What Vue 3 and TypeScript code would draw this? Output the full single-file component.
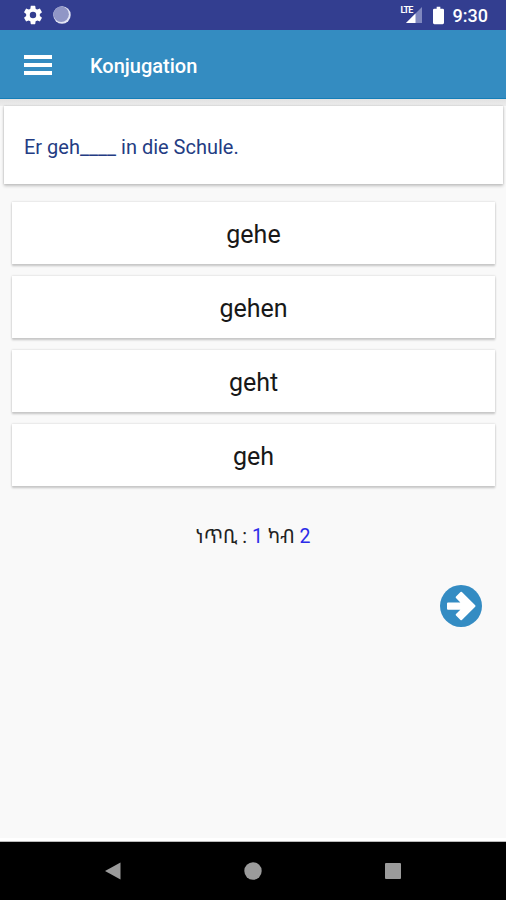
<script setup lang="ts">
import { ref } from 'vue'

const title = 'Konjugation'
const answers: string[] = ['gehe', 'gehen', 'geht', 'geh']
const current = ref(1)
const total = 2
</script>

<template>
  <div class="screen">
    <header class="status">
      <div class="group">
        <svg class="gear" viewBox="0 0 24 24">
          <path fill="#fff" d="M19.43 12.98c.04-.32.07-.64.07-.98s-.03-.66-.07-.98l2.11-1.65c.19-.15.24-.42.12-.64l-2-3.46c-.12-.22-.39-.3-.61-.22l-2.49 1c-.52-.4-1.08-.73-1.69-.98l-.38-2.65A.49.49 0 0 0 14 2h-4c-.25 0-.46.18-.49.42l-.38 2.65c-.61.25-1.17.59-1.69.98l-2.49-1c-.23-.09-.49 0-.61.22l-2 3.46c-.13.22-.07.49.12.64l2.11 1.65c-.04.32-.07.65-.07.98s.03.66.07.98l-2.11 1.65c-.19.15-.24.42-.12.64l2 3.46c.12.22.39.3.61.22l2.49-1c.52.4 1.08.73 1.69.98l.38 2.65c.03.24.24.42.49.42h4c.25 0 .46-.18.49-.42l.38-2.65c.61-.25 1.17-.59 1.69-.98l2.49 1c.23.09.49 0 .61-.22l2-3.46c.12-.22.07-.49-.12-.64l-2.11-1.65zM12 15.5a3.5 3.5 0 1 1 0-7 3.5 3.5 0 0 1 0 7z" />
        </svg>
        <svg class="sync" viewBox="0 0 18 18">
          <circle cx="9" cy="9" r="8.7" fill="#e4e6f5" />
          <circle cx="8.200" cy="8.200" r="7.700" fill="#9096c6" />
        </svg>
      </div>
      <div class="group right">
        <div class="signal">
          <svg viewBox="0 0 22 20">
            <path fill="#8088bf" d="M22 2v16H6z" />
            <path fill="#fff" d="M15.500 8.500V18H6z" />
          </svg>
          <span class="lte">LTE</span>
        </div>
        <svg class="battery" viewBox="0 0 12 19">
          <path fill="#fff" d="M4 0h4v2h2.500Q12 2 12 3.500v14q0 1.500-1.500 1.500h-9Q0 19 0 17.500v-14Q0 2 1.500 2H4z" />
        </svg>
        <span class="clock">9:30</span>
      </div>
    </header>

    <div class="appbar">
      <button class="menu" aria-label="Menu"><i /><i /><i /></button>
      <h1>{{ title }}</h1>
    </div>

    <main>
      <section class="question">Er geh____ in die Schule.</section>
      <div class="answers">
        <button v-for="a in answers" :key="a" class="answer">{{ a }}</button>
      </div>
      <p class="progress">ነጥቢ : <b>{{ current }}</b> ካብ <b>{{ total }}</b></p>
      <button class="next" aria-label="Next">
        <svg viewBox="0 0 42 42">
          <circle cx="21" cy="21" r="21" fill="#348cc3" />
          <path fill="#fff" stroke="#fff" stroke-width="2" stroke-linejoin="round" d="M8 18.500H22.800L16.700 12.200 21.200 7.800 34.500 21 21.200 34.200 16.700 29.800 22.800 23.800H8z" />
        </svg>
      </button>
    </main>

    <nav class="navbar">
      <svg viewBox="0 0 18 18"><path fill="#9b9b9b" d="M1 9 16.500 .5v17z" /></svg>
      <svg viewBox="0 0 18 18"><circle cx="9" cy="9" r="8.700" fill="#9b9b9b" /></svg>
      <svg viewBox="0 0 18 18"><rect x="1" y="1" width="16" height="16" rx="1" fill="#9b9b9b" /></svg>
    </nav>
  </div>
</template>

<style>
body {
  margin: 0;
}
</style>

<style scoped>
.screen {
  width: 506px;
  height: 900px;
  display: flex;
  flex-direction: column;
  overflow: hidden;
  background: #f9f9f9;
  font-family: Roboto, 'Noto Sans Ethiopic', 'Abyssinica SIL', 'Noto Sans', sans-serif;
}
button {
  border: 0;
  padding: 0;
  margin: 0;
  font-family: inherit;
}
svg {
  display: block;
}
.status {
  height: 30px;
  flex: none;
  box-sizing: border-box;
  display: flex;
  justify-content: space-between;
  align-items: center;
  padding: 0 18px 0 22px;
  background: #333e90;
}
.group {
  display: flex;
  align-items: center;
}
.gear {
  width: 22px;
  height: 22px;
}
.sync {
  width: 18px;
  height: 18px;
  margin-left: 9px;
}
.signal {
  position: relative;
}
.signal svg {
  width: 22px;
  height: 20px;
}
.lte {
  position: absolute;
  left: 1px;
  top: 0;
  font-size: 9px;
  line-height: 10px;
  font-weight: 700;
  letter-spacing: -0.9px;
  color: #fff;
}
.battery {
  width: 11px;
  height: 19px;
  margin-left: 11px;
}
.clock {
  margin-left: 9px;
  font-size: 18px;
  line-height: 30px;
  font-weight: 500;
  color: #fff;
  position: relative;
  top: 1px;
}
.appbar {
  height: 69px;
  flex: none;
  box-sizing: border-box;
  display: flex;
  align-items: center;
  padding-left: 24px;
  background: #348cc1;
  border-bottom: 1px solid #147eb8;
}
.menu {
  width: 28px;
  height: 20px;
  margin-top: 2px;
  display: flex;
  flex-direction: column;
  justify-content: space-between;
  background: none;
}
.menu i {
  height: 4px;
  background: #fff;
}
h1 {
  margin: 3px 0 0 38px;
  font-size: 20px;
  line-height: 24px;
  font-weight: 500;
  color: #fff;
}
main {
  flex: 1;
  display: flex;
  flex-direction: column;
}
main::before {
  content: '';
  height: 7px;
  flex: none;
  background: linear-gradient(#e2e2e2, #ededed);
}
.question {
  height: 78px;
  margin: 0 3px 0 4px;
  box-sizing: border-box;
  padding: 29px 20px 0;
  background: #fff;
  box-shadow: 0 0 2px #bdbdbd, 0 2px 3px #c2c2c2;
  font-size: 20px;
  line-height: 24px;
  color: #243c83;
}
.answers {
  display: flex;
  flex-direction: column;
  gap: 12px;
  padding: 18px 11px 0 12px;
}
.answer {
  height: 62px;
  background: #fff;
  box-shadow: 0 0 2px #ccc, 0 2px 2px #c4c4c4;
  font-size: 25px;
  line-height: 30px;
  padding-top: 3px;
  color: #181818;
}
.progress {
  margin: 39px 0 0;
  text-align: center;
  font-size: 19.5px;
  line-height: 24px;
  color: #222;
}
.progress b {
  font-weight: 400;
  color: #2c2ce8;
}
.next {
  width: 42px;
  height: 42px;
  align-self: flex-end;
  margin: 36px 24px 0 0;
  background: none;
}
.navbar {
  height: 58px;
  flex: none;
  box-sizing: border-box;
  display: flex;
  justify-content: space-between;
  align-items: center;
  padding: 0 104px;
  background: #000;
  box-shadow: 0 -1px 0 #bbb, 0 -4px 0 #fff;
}
.navbar svg {
  width: 18px;
  height: 18px;
}
</style>
